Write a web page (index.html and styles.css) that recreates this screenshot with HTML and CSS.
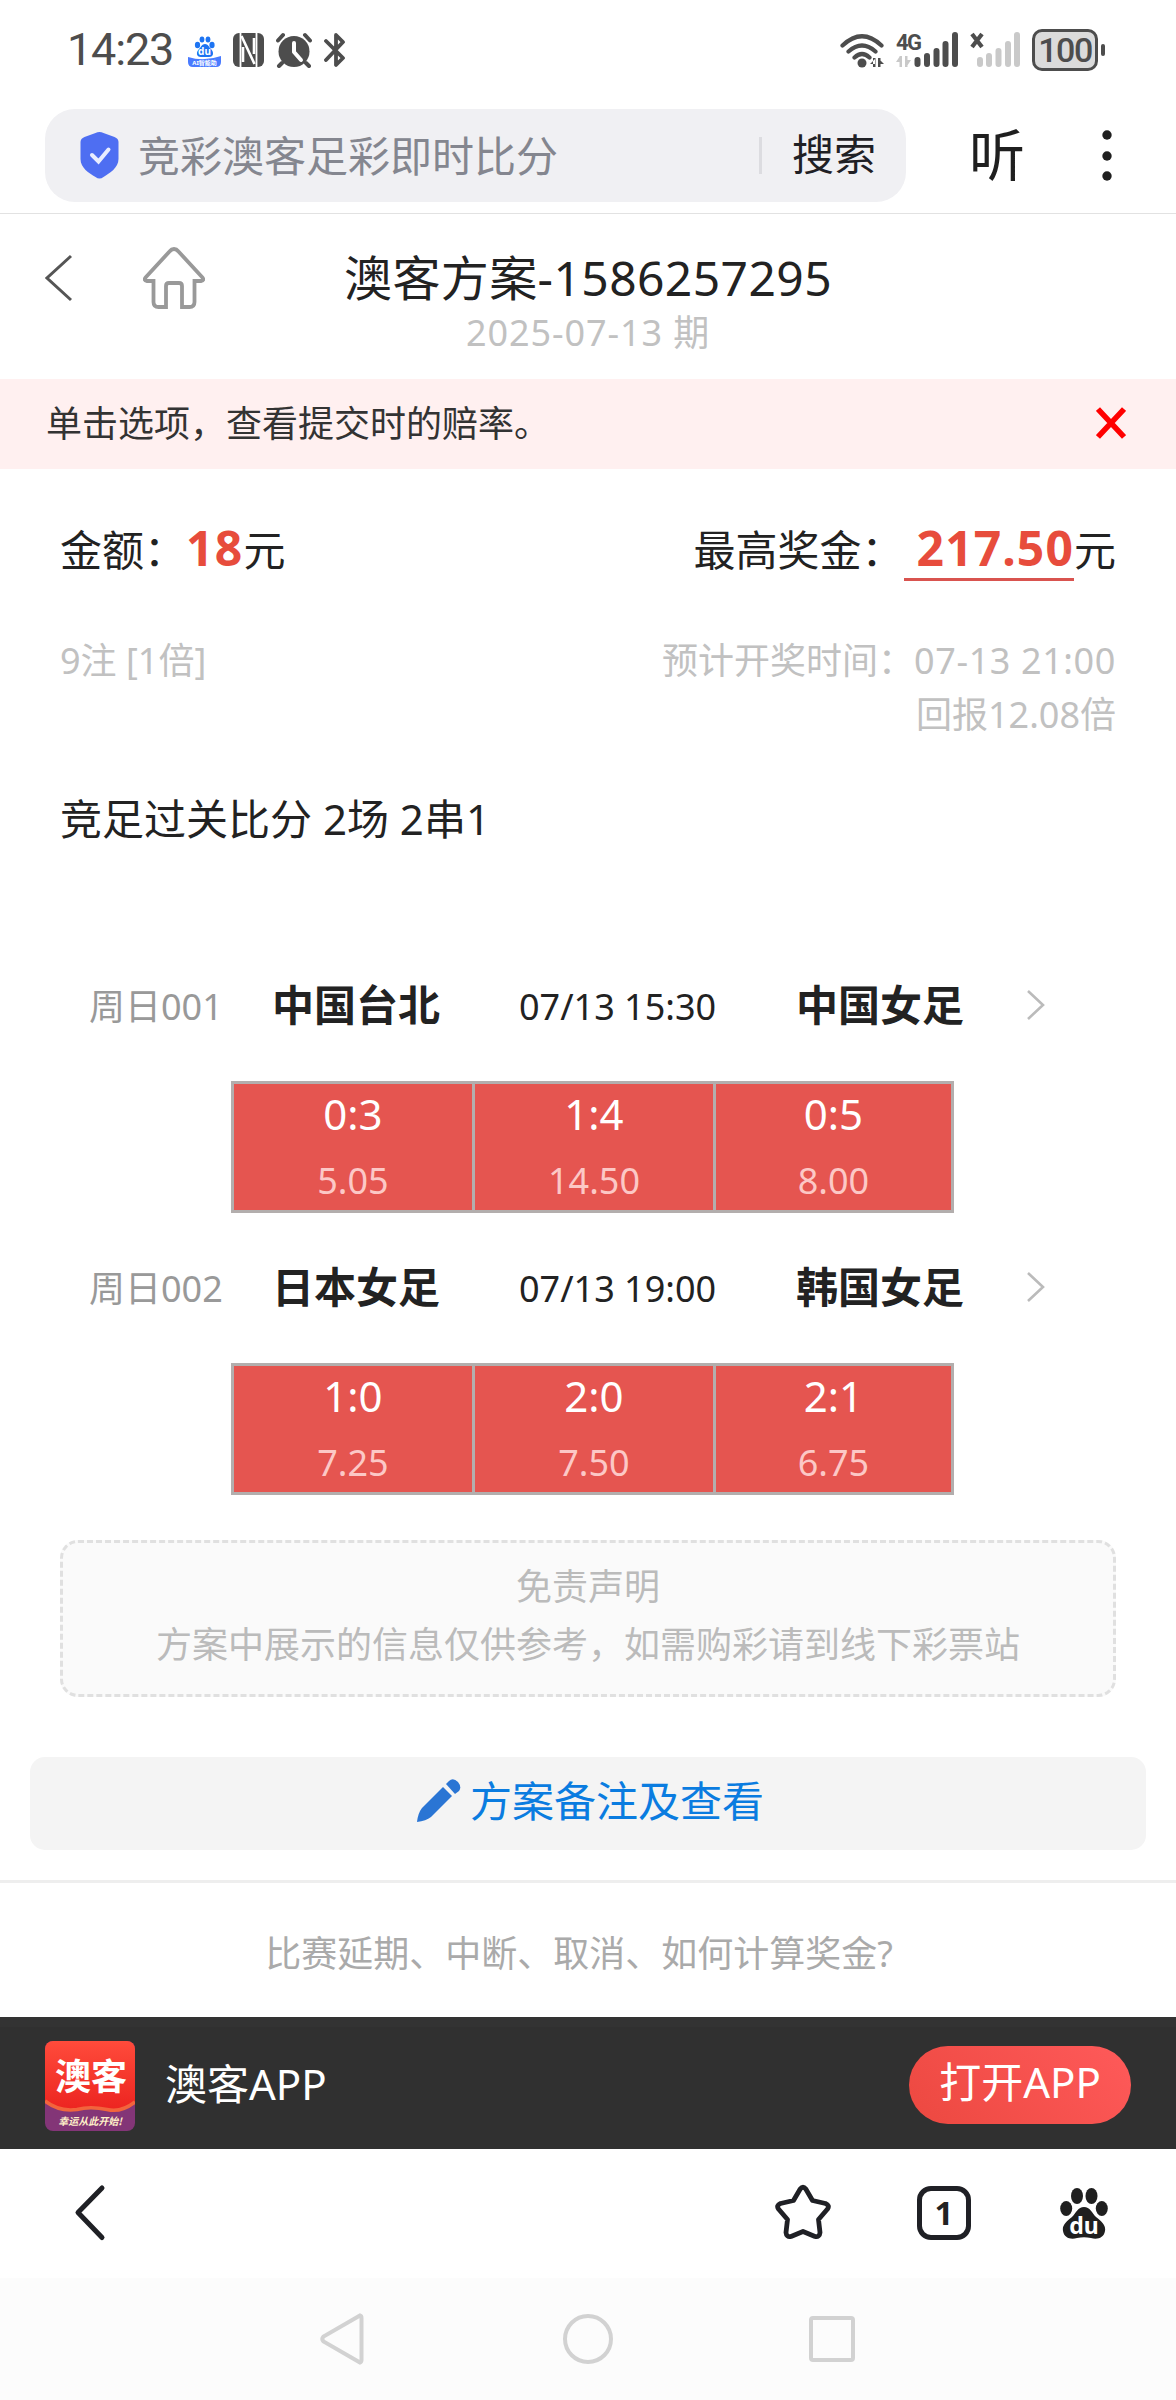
FILE: index.html
```html
<!DOCTYPE html>
<html lang="zh-CN">
<head>
    <meta charset="UTF-8">
    <meta name="viewport" content="width=device-width, initial-scale=1.0">
    <title>澳客方案-1586257295</title>
    <link rel="stylesheet" href="styles.css">
</head>
<body>
    <!-- Phone status bar -->
    <div class="status-bar">
        <div class="status-left">
            <span class="clock">14:23</span>
            <svg class="icon-baidu" width="33" height="34" viewBox="0 0 33 34">
                <g fill="#1d74f2">
                    <ellipse cx="9.500" cy="12" rx="2.600" ry="3.200"/>
                    <ellipse cx="14" cy="6.500" rx="2.400" ry="3"/>
                    <ellipse cx="20" cy="6.500" rx="2.400" ry="3"/>
                    <ellipse cx="24" cy="12" rx="2.600" ry="3.200"/>
                    <path d="M17 11c3 0 4 3 6 5 3 3 3 8-2 8h-8c-5 0-5-5-2-8 2-2 3-5 6-5z"/>
                </g>
                <path fill="#4a7bff" d="M0 24q16 5 33-1v6q0 5-5 5H5q-5 0-5-5z"/>
                <text class="mini-du" x="16.500" y="22" text-anchor="middle">du</text>
                <text class="mini-label" x="16.500" y="32" text-anchor="middle">AI智能助</text>
            </svg>
            <svg width="31" height="34" viewBox="0 0 31 34">
                <rect width="31" height="34" rx="6" fill="#4d4d4d"/>
                <path d="M7.500 0v34M23.500 0v34" stroke="#fff" stroke-width="1.800"/>
                <path d="M8.500 3L21.500 31M10 14v15M21 5v16" fill="none" stroke="#fff" stroke-width="2.600"/>
            </svg>
            <svg class="icon-alarm" width="36" height="36" viewBox="0 0 36 36">
                <circle cx="18" cy="19.500" r="15.500" fill="#4d4d4d"/>
                <path d="M2 8.500L7 3M34 8.500L29 3M6 31l-3 3M30 31l3 3" stroke="#4d4d4d" stroke-width="4" stroke-linecap="round"/>
                <path d="M18 11v9l7 8" fill="none" stroke="#fff" stroke-width="4" stroke-linecap="round" stroke-linejoin="round"/>
            </svg>
            <svg width="22" height="36" viewBox="0 0 22 36">
                <path d="M2 9l17 17-7 7V3l7 7L2 28" fill="none" stroke="#4d4d4d" stroke-width="3.800" stroke-linecap="round" stroke-linejoin="round"/>
            </svg>
        </div>
        <div class="status-right">
            <svg width="44" height="35" viewBox="0 0 44 35">
                <g fill="none" stroke="#4d4d4d" stroke-width="4.200" stroke-linecap="round">
                    <path d="M2.500 12.500Q22-6 41.500 12.500M8.500 18.500q13.500-12 27 0M14.500 24.500q7.500-7 15 0"/>
                </g>
                <circle cx="22" cy="30" r="4.500" fill="#4d4d4d"/>
                <path d="M30 31h5v-5zM33 25h2.500v9H33zM38 25h2.500v9H38zM40 27l4 4h-4z" fill="#4d4d4d"/>
            </svg>
            <svg class="signal" width="64" height="36" viewBox="0 0 64 36">
                <text class="net-type" x="0" y="18">4G</text>
                <path d="M0 30l4-6v6zM3.500 24H6v11H3.500zM9 24h2.500v11H9zM11 28h4l-4 6z" fill="#c9c9c9"/>
                <path d="M21.500 28v4M31 24v8M40.500 19v13M49.500 12v20M59 3v29" stroke="#4d4d4d" stroke-width="6" stroke-linecap="round"/>
            </svg>
            <svg width="50" height="36" viewBox="0 0 50 36">
                <path d="M2 2l10 13M12 2L2 15" stroke="#4d4d4d" stroke-width="4.200"/>
                <path d="M10 28v4M19 24v8M28.500 19v13M38 12v20M47 3v29" stroke="#c9c9c9" stroke-width="6" stroke-linecap="round"/>
            </svg>
            <div class="battery">100</div>
        </div>
    </div>

    <!-- Browser address bar -->
    <div class="address-bar">
        <div class="search-box">
            <svg width="39" height="47" viewBox="0 0 39 47">
                <path d="M19.500 0q2 0 4 1l11 4q4 1.500 4 5v17c0 9-9 14-15 18q-4 3-8 0C9 41 .500 36 .500 27V10q0-3.500 4-5l11-4q2-1 4-1z" fill="#4e6ef2"/>
                <path d="M12 23l6.500 6.500L28.500 17.500" fill="none" stroke="#e9edff" stroke-width="4" stroke-linecap="round"/>
            </svg>
            <span class="search-text">竞彩澳客足彩即时比分</span>
            <span class="search-btn">搜索</span>
        </div>
        <span class="listen">听</span>
        <svg width="10" height="58" viewBox="0 0 10 58" fill="#1f1f1f">
            <circle cx="5" cy="8" r="4.700"/>
            <circle cx="5" cy="29" r="4.700"/>
            <circle cx="5" cy="49" r="4.700"/>
        </svg>
    </div>

    <header class="page-header">
        <div class="header-nav">
            <svg width="28" height="48" viewBox="0 0 28 48">
                <path d="M26 2L2 24l24 22" fill="none" stroke="#555" stroke-width="3"/>
            </svg>
            <svg width="62" height="64" viewBox="0 0 62 64">
                <path d="M31 3q2.500 0 4.500 2.500L59 31q3 3.500-1 4h-6.500v21q0 5-5 5H39V40q0-3-3-3H26q-3 0-3 3v21h-7.500q-5 0-5-5V35H4q-4-.5-1-4L26.500 5.500Q28.500 3 31 3z" fill="none" stroke="#999" stroke-width="3.800"/>
            </svg>
        </div>
        <div class="header-title">
            <h1>澳客方案-1586257295</h1>
            <p>2025-07-13 期</p>
        </div>
    </header>

    <div class="notice">
        <span>单击选项，查看提交时的赔率。</span>
        <svg width="30" height="32" viewBox="0 0 30 32">
            <path d="M2 2l26 28M28 2L2 30" stroke="#f00" stroke-width="5.500"/>
        </svg>
    </div>

    <main>
        <section class="summary">
            <div class="money-row">
                <div>金额：<b>18</b>元</div>
                <div>最高奖金：<b class="prize">217.50</b>元</div>
            </div>
            <div class="detail-row">
                <div>9注 [1倍]</div>
                <div class="detail-right">预计开奖时间：<span class="open-time">07-13 21:00</span><br>回报12.08倍</div>
            </div>
            <h2>竞足过关比分 2场 2串1</h2>
        </section>

        <section class="match">
            <div class="match-info">
                <span class="match-no">周日001</span>
                <b>中国台北</b>
                <span class="match-time">07/13 15:30</span>
                <b>中国女足</b>
                <svg width="20" height="32" viewBox="0 0 20 32">
                    <path d="M2 2l15 14L2 30" fill="none" stroke="#bbb" stroke-width="2.600"/>
                </svg>
            </div>
            <div class="options">
                <div class="option">0:3<span>5.05</span></div>
                <div class="option">1:4<span>14.50</span></div>
                <div class="option">0:5<span>8.00</span></div>
            </div>
        </section>

        <section class="match">
            <div class="match-info">
                <span class="match-no">周日002</span>
                <b>日本女足</b>
                <span class="match-time">07/13 19:00</span>
                <b>韩国女足</b>
                <svg width="20" height="32" viewBox="0 0 20 32">
                    <path d="M2 2l15 14L2 30" fill="none" stroke="#bbb" stroke-width="2.600"/>
                </svg>
            </div>
            <div class="options">
                <div class="option">1:0<span>7.25</span></div>
                <div class="option">2:0<span>7.50</span></div>
                <div class="option">2:1<span>6.75</span></div>
            </div>
        </section>

        <div class="disclaimer">
            <p>免责声明</p>
            <p>方案中展示的信息仅供参考，如需购彩请到线下彩票站</p>
        </div>

        <div class="remark-btn">
            <svg width="44" height="44" viewBox="0 0 44 44" fill="#2a75d4">
                <path d="M26 8l9 9L14 38Q9 42 0 43 1 34 5 29z"/>
                <path d="M29 5l3-3q4-4 9 1 4 5 1 9l-4 3z"/>
            </svg>
            方案备注及查看
        </div>
    </main>

    <div class="faq">比赛延期、中断、取消、如何计算奖金?</div>

    <!-- App download banner -->
    <div class="app-banner">
        <svg class="app-logo" width="90" height="90" viewBox="0 0 90 90">
            <defs>
                <linearGradient id="logoRed" x1="0" y1="0" x2="0" y2="1">
                    <stop offset="0" stop-color="#ff4b3b"/>
                    <stop offset="1" stop-color="#ec2420"/>
                </linearGradient>
            </defs>
            <rect width="90" height="90" fill="#833577"/>
            <path d="M0 0h90v62Q76 72 62 68.500 45 65 32 68.500 14 71 0 60z" fill="url(#logoRed)"/>
            <path d="M0 60Q14 71 32 68.500 45 65 62 68.500 76 72 90 61" fill="none" stroke="#f2643c" stroke-width="3.500"/>
            <text class="logo-name" x="46" y="49" text-anchor="middle">澳客</text>
            <text class="logo-slogan" x="45" y="84" text-anchor="middle">幸运从此开始!</text>
        </svg>
        <span class="app-name">澳客APP</span>
        <a class="open-app">打开APP</a>
    </div>

    <!-- Browser toolbar -->
    <div class="toolbar">
        <svg class="tool-back" width="32" height="58" viewBox="0 0 32 58">
            <path d="M28 4L4 28.500 28 53.500" fill="none" stroke="#1f2025" stroke-width="5" stroke-linecap="round" stroke-linejoin="round"/>
        </svg>
        <svg class="tool-star" width="56" height="56" viewBox="0 0 56 56">
            <path d="M25.200 5Q28 1.500 30.800 5L37.500 16.500 50.500 19.500Q55 21.500 52.500 25L43.500 35.500 45 48.500Q44.500 53.500 40 52.500L28 47.500 16 52.500Q11.500 53.500 11 48.500L12.500 35.500 3.500 25Q1 21.500 5.500 19.500L18.500 16.500z" fill="none" stroke="#1f2025" stroke-width="4.800" stroke-linejoin="round"/>
        </svg>
        <div class="tabs">1</div>
        <svg width="48" height="51" viewBox="0 0 48 51">
            <g fill="#1f1f1f">
                <ellipse cx="6.200" cy="20.500" rx="6" ry="7.400"/>
                <ellipse cx="17" cy="8" rx="6" ry="8"/>
                <ellipse cx="31.500" cy="8" rx="6" ry="8"/>
                <ellipse cx="41.800" cy="20.500" rx="6" ry="7.400"/>
                <path d="M24 19c6 0 8 6 12 10 6 5 10 8 9 14-1 7-8 9-14 7-5-1-9-1-14 0-6 2-13 0-14-7-1-6 3-9 9-14 4-4 6-10 12-10z"/>
            </g>
            <text class="paw-du" x="24" y="45.500" text-anchor="middle">du</text>
        </svg>
    </div>

    <!-- System navigation keys -->
    <div class="system-nav">
        <svg width="44" height="52" viewBox="0 0 44 52">
            <path d="M40 2.500q1.500.5 1.500 2.500v42q0 2-1.500 2.500L3.500 28.500q-2.500-2.500 0-5z" fill="none" stroke="#d2d2d2" stroke-width="4"/>
        </svg>
        <div class="nav-home"></div>
        <div class="nav-recent"></div>
    </div>
</body>
</html>
```

FILE: styles.css
```css
* {
    margin: 0;
    padding: 0;
    box-sizing: border-box;
}

body {
    width: 1176px;
    background: #fff;
    color: #222;
    font-family: 'Noto Sans', 'Noto Sans CJK SC', sans-serif;
    font-size: 42px;
    line-height: 60px;
}

svg {
    display: block;
    flex: none;
}

/* status bar */
.status-bar {
    height: 109px;
    padding: 31px 78px 0 67px;
    display: flex;
    justify-content: space-between;
}

.status-left,
.status-right {
    height: 38px;
    display: flex;
    align-items: center;
}

.status-left {
    gap: 12px;
}

.clock {
    width: 109px;
    font-family: Roboto, sans-serif;
    font-size: 45px;
    color: #4d4d4d;
    letter-spacing: -1.2px;
}

.mini-du {
    font: bold 10px 'Noto Sans', sans-serif;
    fill: #fff;
}

.mini-label {
    font: bold 6px 'Noto Sans', 'Noto Sans CJK SC', sans-serif;
    fill: #fff;
}

.status-right {
    gap: 12px;
}

.signal {
    margin-right: -2px;
    overflow: visible;
}

.net-type {
    font: bold 22px Roboto, sans-serif;
    fill: #4d4d4d;
    letter-spacing: -1.5px;
}

.battery {
    position: relative;
    width: 66px;
    height: 42px;
    border: 3px solid #4d4d4d;
    border-radius: 10px;
    background: #dbdbdb;
    color: #4d4d4d;
    font: 500 34px/36px Roboto, sans-serif;
    letter-spacing: -1.5px;
    text-align: center;
}

.battery::after {
    content: '';
    position: absolute;
    right: -10px;
    top: 12px;
    width: 4px;
    height: 12px;
    border-radius: 2px;
    background: #4d4d4d;
}

/* address bar */
.address-bar {
    height: 105px;
    padding: 0 64px 11px 45px;
    display: flex;
    align-items: center;
    border-bottom: 1px solid #e2e2e2;
}

.search-box {
    width: 861px;
    height: 93px;
    padding: 0 30px 0 35px;
    border-radius: 30px;
    background: #f0f0f3;
    display: flex;
    align-items: center;
}

.search-text {
    margin-left: 19px;
    color: #84868f;
}

.search-btn {
    margin-left: auto;
    padding: 0 0 3px 30px;
    color: #1f2025;
    line-height: 34px;
    border-left: 3px solid #dcdce0;
}

.listen {
    margin-left: 63px;
    margin-right: auto;
    padding-bottom: 3px;
    font-size: 56px;
    color: #1f1f1f;
}

/* page header */
.page-header {
    position: relative;
    height: 165px;
    padding-top: 32px;
}

.header-nav {
    position: absolute;
    left: 45px;
    top: 32px;
    display: flex;
    align-items: center;
    gap: 70px;
}

.header-title {
    text-align: center;
}

.header-title h1 {
    font-size: 48px;
    font-weight: normal;
    line-height: 64px;
    letter-spacing: 0.4px;
}

.header-title p {
    font-size: 36px;
    line-height: 46px;
    letter-spacing: 0.9px;
    color: #c1c1c1;
}

.notice {
    height: 90px;
    padding: 0 50px 3px 46px;
    display: flex;
    align-items: center;
    justify-content: space-between;
    background: #fff0f0;
    color: #333;
    font-size: 36px;
}

.notice span {
    padding-top: 2px;
}

/* summary */
.summary {
    padding: 49px 60px 0;
    height: 476px;
}

.money-row {
    height: 111px;
    display: flex;
    justify-content: space-between;
}

.money-row b {
    display: inline-block;
    font-size: 48px;
    letter-spacing: 1.3px;
    color: #e74c3c;
}

.money-row .prize {
    height: 63px;
    padding-left: 13px;
    border-bottom: 3px solid #d9534f;
    letter-spacing: 1.1px;
}

.detail-row {
    height: 160px;
    padding-top: 5px;
    display: flex;
    justify-content: space-between;
    color: #c1c1c1;
    font-size: 36px;
    line-height: 54px;
}

.detail-right {
    text-align: right;
}

.open-time {
    letter-spacing: 0.6px;
}

.summary h2 {
    font-size: 42px;
    font-weight: normal;
}

/* matches */
.match {
    height: 282px;
    padding-top: 28px;
}

.match-info {
    display: grid;
    grid-template-columns: 183px 247px 277px 230px auto;
    align-items: center;
    padding-left: 89px;
    height: 60px;
}

.match-no {
    padding-top: 4px;
    font-size: 36px;
    color: #999;
}

.match-time {
    padding-top: 4px;
    font-size: 36px;
}

.options {
    width: 723px;
    height: 132px;
    margin: 48px 0 0 231px;
    padding: 3px;
    display: grid;
    grid-template-columns: 238px 238px 1fr;
    grid-template-rows: 126px;
    gap: 3px;
    background: #b3aead;
}

.option {
    background: #e55550;
    color: #fff;
    text-align: center;
}

.option span {
    display: block;
    font-size: 36px;
    line-height: 74px;
    color: #fcc8c6;
}

.disclaimer {
    height: 157px;
    margin: 31px 60px 60px;
    padding-top: 15px;
    border: 3px dashed #e0e0e0;
    border-radius: 18px;
    background: #fafafa;
    color: #bbb;
    font-size: 36px;
    line-height: 58px;
    text-align: center;
}

.remark-btn {
    height: 93px;
    margin: 0 30px 30px;
    padding: 0 0 5px 5px;
    border-radius: 15px;
    background: #f4f4f4;
    color: #0a7ce0;
    display: flex;
    align-items: center;
    justify-content: center;
    gap: 9px;
}

.faq {
    height: 137px;
    padding: 41px 18px 0 0;
    border-top: 3px solid #eee;
    color: #aaa;
    font-size: 36px;
    text-align: center;
}

/* app banner */
.app-banner {
    height: 132px;
    padding: 0 45px 6px;
    display: flex;
    align-items: center;
    background: #303030;
    border-top: 10px solid #333;
    color: #fff;
}

.app-logo {
    border-radius: 8px;
    margin-bottom: -2px;
}

.logo-name {
    font: bold 36px 'Noto Sans CJK SC', sans-serif;
    fill: #fff;
}

.logo-slogan {
    font: bold italic 10px 'Noto Sans CJK SC', sans-serif;
    fill: #fff0c8;
}

.app-name {
    margin-left: 30px;
    padding-bottom: 2px;
}

.open-app {
    width: 222px;
    height: 78px;
    margin-left: auto;
    border-radius: 39px;
    background: linear-gradient(45deg, #ec4840, #ff5a5a);
    line-height: 72px;
    text-align: center;
}

/* browser toolbar */
.toolbar {
    height: 129px;
    padding: 0 68px 1px 74px;
    display: flex;
    align-items: center;
}

.tool-back {
    margin-right: auto;
}

.tool-star {
    margin-bottom: 3px;
}

.tabs {
    width: 54px;
    height: 54px;
    margin: 0 89px 0 86px;
    border: 5px solid #1f2025;
    border-radius: 14px;
    font: bold 33px/43px 'Noto Sans', sans-serif;
    text-align: center;
}

.paw-du {
    font: bold 23px 'Noto Sans', sans-serif;
    fill: #fff;
}

.system-nav {
    height: 122px;
    padding-left: 320px;
    display: flex;
    align-items: center;
    background: #fcfcfc;
}

.nav-home {
    width: 50px;
    height: 50px;
    margin: 0 196px 0 199px;
    border: 4px solid #d2d2d2;
    border-radius: 50%;
}

.nav-recent {
    width: 46px;
    height: 46px;
    border: 4px solid #d2d2d2;
    border-radius: 4px;
}
```
